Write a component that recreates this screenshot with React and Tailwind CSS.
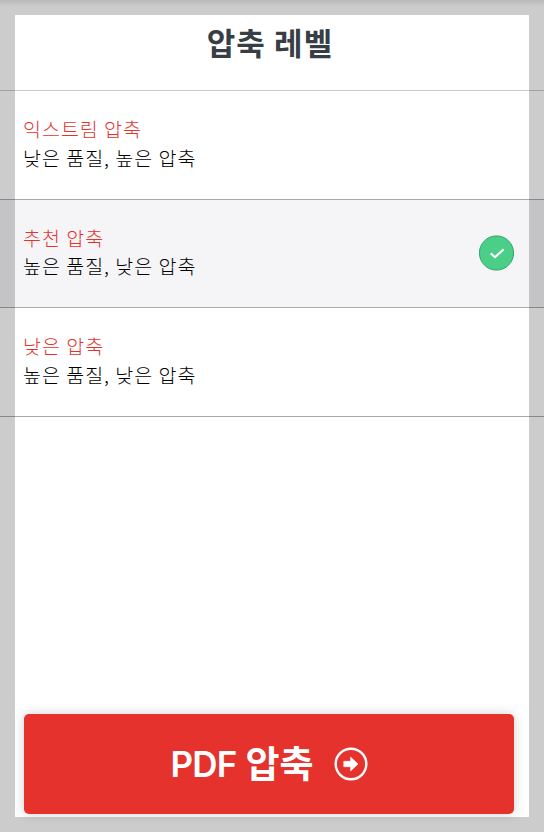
const levels = [
  { name: '익스트림 압축', detail: '낮은 품질, 높은 압축' },
  { name: '추천 압축', detail: '높은 품질, 낮은 압축', selected: true },
  { name: '낮은 압축', detail: '높은 품질, 낮은 압축' },
];

function CheckBadge() {
  return (
    <svg className="h-9 w-9 shrink-0" viewBox="0 0 36 36" fill="none">
      <circle cx="17.5" cy="18" r="17.1" fill="#4bce87" stroke="#2da765" />
      <path d="M11.7 18.4 16 22.2 24.7 14.2" stroke="#fff" strokeWidth="2.1" />
    </svg>
  );
}

function ArrowCircle() {
  return (
    <svg className="h-[34px] w-[34px] shrink-0" viewBox="0 0 34 34" fill="none">
      <circle cx="17" cy="17" r="15.3" stroke="#fff" strokeWidth="2.4" />
      <path d="M9.8 14.3h6.8V10l7.4 7-7.4 7v-4.3H9.8z" fill="#fff" stroke="#fff" strokeWidth="0.6" strokeLinejoin="round" />
    </svg>
  );
}

function Level({ name, detail, selected }) {
  return (
    <li
      className={`flex h-[108.5px] items-center justify-between border-b border-[#aaaaac] pr-[29.5px] pl-[23px] ${
        selected ? 'bg-[#f5f5f8]' : 'bg-white'
      }`}
    >
      <div className="pb-0.5 text-[19.5px] leading-[28.5px] font-light tracking-[1px] whitespace-nowrap">
        <div className="text-[#e5322d]">{name}</div>
        <div className="text-black">{detail}</div>
      </div>
      {selected && <CheckBadge />}
    </li>
  );
}

export default function App() {
  return (
    <main className="relative flex h-[832px] w-[544px] flex-col overflow-hidden bg-white font-['Noto_Sans_CJK_KR',sans-serif]">
      <h1 className="flex h-[91px] justify-center border-b border-[#cbcbcb] pt-[21px] pr-[4px] text-[31px] leading-[42px] font-bold tracking-[1.1px] text-[#383e45]">
        압축 레벨
      </h1>
      <ul>
        {levels.map((level) => (
          <Level key={level.name} {...level} />
        ))}
      </ul>
      <button className="mx-auto mt-auto mb-[18px] ml-6 flex h-[100px] w-[490px] items-center justify-center rounded-[5px] bg-[#e5322d] text-white shadow-[0_0_12px_rgba(0,0,0,0.18)]">
        <span className="mr-[9px] pt-px font-['Inter'] text-[35px] font-semibold tracking-[-0.8px]">PDF</span>
        <span className="mr-5 pb-0.5 text-[37px] font-bold">압축</span>
        <ArrowCircle />
      </button>
      <div className="pointer-events-none absolute inset-0 border-[15px] border-black/20" />
      <div className="pointer-events-none absolute inset-x-0 top-0 h-1.5 bg-linear-to-b from-black/10 to-transparent" />
    </main>
  );
}
